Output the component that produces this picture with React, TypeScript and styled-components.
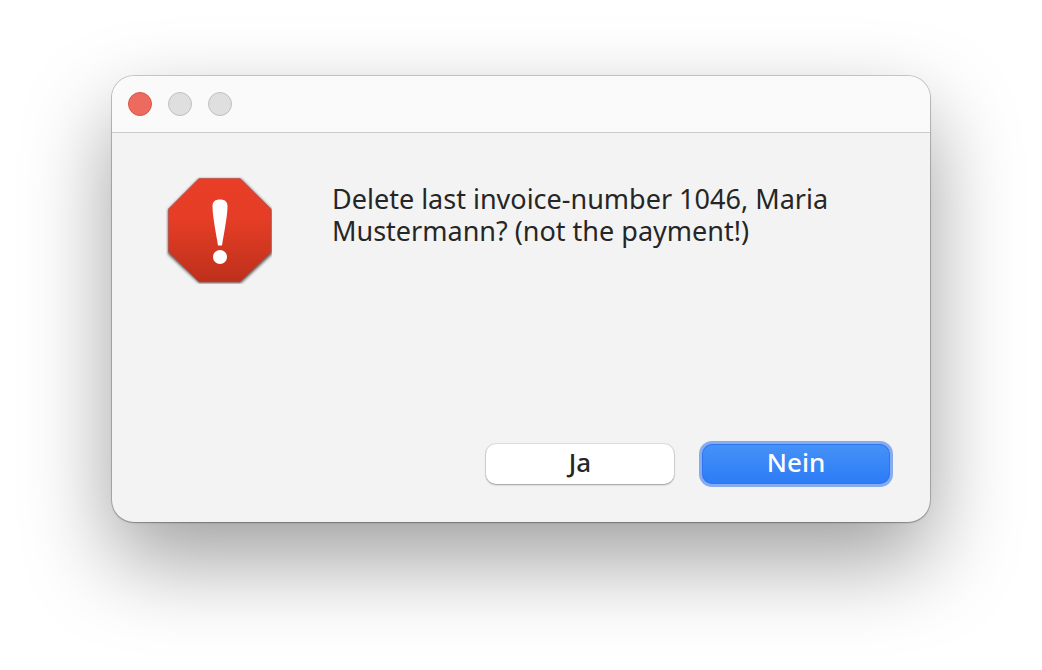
import React from "react";
import styled, { createGlobalStyle } from "styled-components";

const GlobalStyle = createGlobalStyle`
  *, *::before, *::after { box-sizing: border-box; }
  body {
    margin: 0;
    background: #ffffff;
    color: #262626;
    font-family: "Lucida Grande", "Noto Sans", "Open Sans", sans-serif;
  }
`;

const Desktop = styled.main`
  display: flex;
  min-height: 100vh;
  padding: 76px 112px 148px;
`;

const Dialog = styled.section`
  flex: 1;
  display: flex;
  flex-direction: column;
  min-width: 0;
  border-radius: 22px;
  background: #f3f3f3;
  box-shadow:
    0 0 0 1px rgba(0, 0, 0, 0.18),
    0 1px 2px rgba(0, 0, 0, 0.2),
    0 38px 88px rgba(0, 0, 0, 0.38);
`;

const TitleBar = styled.header`
  display: flex;
  align-items: center;
  gap: 16px;
  height: 57px;
  padding: 0 16px;
  border-bottom: 1px solid #cbcbcb;
  border-radius: 22px 22px 0 0;
  background: #fafafa;
`;

const WindowControl = styled.button<{ $active?: boolean }>`
  width: 24px;
  height: 24px;
  padding: 0;
  border: 1px solid ${(p) => (p.$active ? "#d9574c" : "#c0c0c0")};
  border-radius: 50%;
  background: ${(p) => (p.$active ? "#ed6a5f" : "#dfdfdf")};
`;

const Content = styled.div`
  flex: 1;
  display: flex;
  align-items: flex-start;
  gap: 60px;
  padding: 43px 80px 40px 54px;
`;

const AlertIcon = styled.svg`
  flex: none;
  width: 106px;
  height: 108px;
`;

const Message = styled.p`
  flex: 1;
  margin: 0;
  padding-top: 7px;
  font-size: 27px;
  line-height: 32px;
`;

const Actions = styled.footer`
  display: flex;
  justify-content: flex-end;
  gap: 28px;
  padding: 0 40px 38px;
`;

const ActionButton = styled.button<{ $primary?: boolean }>`
  width: 188px;
  height: 40px;
  padding: 0 0 4px;
  border: 0;
  border-radius: 10px;
  font-family: inherit;
  font-size: 26px;
  font-weight: 500;
  line-height: 32px;
  color: ${(p) => (p.$primary ? "#ffffff" : "#262626")};
  background: ${(p) =>
    p.$primary ? "linear-gradient(#4592f8, #2d7bf6)" : "#ffffff"};
  box-shadow: ${(p) =>
    p.$primary
      ? "inset 0 0 0 1px #2f75ec, 0 0 0 3px #86abf1"
      : "0 0 0 1px rgba(0, 0, 0, 0.08), 0 1px 2px rgba(0, 0, 0, 0.3)"};
`;

function StopSign() {
  return (
    <AlertIcon viewBox="0 0 106 108" role="img" aria-label="Warning">
      <defs>
        <linearGradient id="sign" x1="0" y1="0" x2="0" y2="1">
          <stop offset="0" stopColor="#e93e26" />
          <stop offset="0.4" stopColor="#e53d26" />
          <stop offset="1" stopColor="#bd301b" />
        </linearGradient>
        <filter id="shade" x="-10%" y="-10%" width="120%" height="120%">
          <feGaussianBlur stdDeviation="1.5" />
        </filter>
      </defs>
      <path
        d="M33 3H75L106 34V78L75 107H33L2 78V34Z"
        fill="#000"
        opacity="0.65"
        filter="url(#shade)"
      />
      <path
        d="M33 2.5H74L105 33V76L74 106H33L2.500 76V33Z"
        fill="url(#sign)"
        stroke="#b74b43"
        strokeOpacity="0.65"
      />
      <path
        d="M46.500 30C46.500 25.500 49.500 23.500 54 23.500S61.500 25.500 61.500 30C61.500 40 58 57 56 69.500H52C50 57 46.500 40 46.500 30Z"
        fill="#fff"
      />
      <circle cx="54" cy="81" r="7" fill="#fff" />
    </AlertIcon>
  );
}

export default function App() {
  return (
    <>
      <GlobalStyle />
      <Desktop>
        <Dialog role="alertdialog" aria-describedby="message">
          <TitleBar>
            <WindowControl type="button" aria-label="Close" $active />
            <WindowControl type="button" aria-label="Minimize" disabled />
            <WindowControl type="button" aria-label="Zoom" disabled />
          </TitleBar>
          <Content>
            <StopSign />
            <Message id="message">
              Delete last invoice-number 1046, Maria Mustermann? (not the
              payment!)
            </Message>
          </Content>
          <Actions>
            <ActionButton type="button">Ja</ActionButton>
            <ActionButton type="button" $primary>
              Nein
            </ActionButton>
          </Actions>
        </Dialog>
      </Desktop>
    </>
  );
}
